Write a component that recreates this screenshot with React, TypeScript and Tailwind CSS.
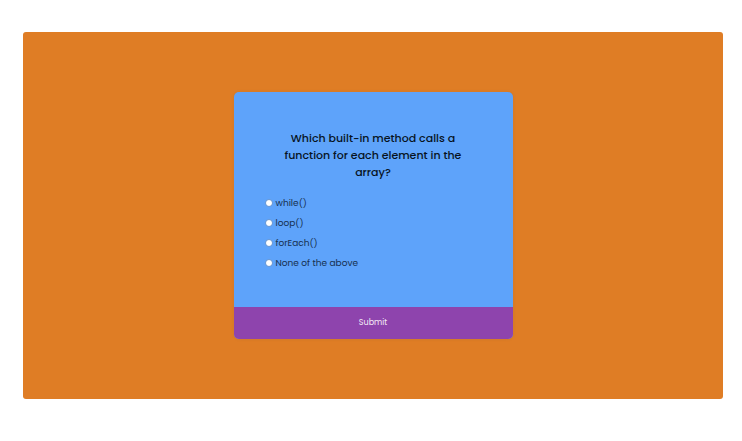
const options = [
  { id: 'a', label: 'while()' },
  { id: 'b', label: 'loop()' },
  { id: 'c', label: 'forEach()' },
  { id: 'd', label: 'None of the above' },
];

export default function App() {
  return (
    <div className="min-h-screen bg-white pt-8 pr-[19px] pl-[23px] font-[Poppins,Inter,sans-serif]">
      <main className="flex items-center justify-center rounded-[3px] bg-[#df7d25] py-15">
        <form
          className="w-full max-w-[279px] overflow-hidden rounded-[5px] bg-[#5ea3fa] shadow-[0_0_3px_rgba(100,100,100,0.2)]"
          onSubmit={(event) => event.preventDefault()}
        >
          <fieldset className="px-8 pt-[38px] pb-9">
            <legend className="contents">
              <h2 className="px-3 text-center text-[11px] leading-[17px] font-medium text-[#07131f]">
                Which built-in method calls a function for each element in the array?
              </h2>
            </legend>
            <ul className="mt-3.5 flex flex-col gap-1">
              {options.map(({ id, label }) => (
                <li key={id} className="flex h-4 items-center gap-1">
                  <input
                    type="radio"
                    name="answer"
                    id={id}
                    className="size-1.5 shrink-0 appearance-none rounded-full bg-white outline outline-[#8093ab]/50 checked:bg-[#8e44ad]"
                  />
                  <label htmlFor={id} className="text-[9px] leading-4 text-[#16304f]">
                    {label}
                  </label>
                </li>
              ))}
            </ul>
          </fieldset>
          <button type="submit" className="block h-8 w-full bg-[#8e44ad] text-[8px] leading-8 text-[#f3eaf6]">
            Submit
          </button>
        </form>
      </main>
    </div>
  );
}
